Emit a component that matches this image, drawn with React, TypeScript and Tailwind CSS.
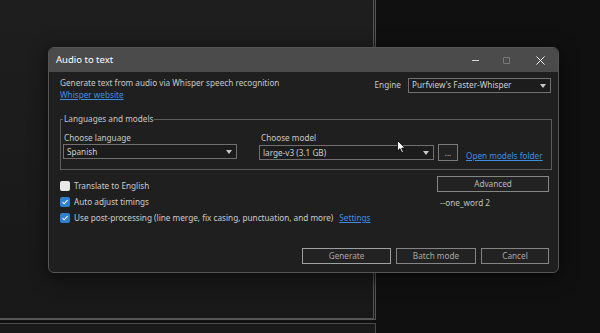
import React from "react";

const font = { fontFamily: '"Segoe UI", "Noto Sans", "Liberation Sans", sans-serif' };

function Select({ text, className }: { text: string; className: string }) {
  return (
    <div className={`flex items-center justify-between h-[15px] border border-[#707070] bg-[#1c1c1c] pl-[3px] pr-[4px] text-[8.2px] text-[#d0d0d0] ${className}`}>
      <span className="leading-none whitespace-nowrap">{text}</span>
      <svg width="6" height="4" viewBox="0 0 6 4"><path d="M0 0 L6 0 L3 4 Z" fill="#c8c8c8" /></svg>
    </div>
  );
}

function Check({ checked, label, children }: { checked: boolean; label: string; children?: React.ReactNode }) {
  return (
    <div className="flex items-center h-[16px]">
      {checked ? (
        <div className="w-[10px] h-[10px] rounded-[2px] bg-[#2f7ed1] flex items-center justify-center">
          <svg width="8" height="8" viewBox="0 0 8 8"><path d="M1.5 4.2 L3.2 5.8 L6.5 2.2" stroke="#fff" strokeWidth="1.1" fill="none" /></svg>
        </div>
      ) : (
        <div className="w-[10px] h-[10px] rounded-[2px] bg-[#e8e8e8]" />
      )}
      <span className="ml-[4px] text-[8.2px] text-[#cccccc] leading-none whitespace-nowrap">{label}</span>
      {children}
    </div>
  );
}

function Btn({ text, className, strong }: { text: string; className: string; strong?: boolean }) {
  return (
    <div className={`flex items-center justify-center h-[16px] bg-[#222222] text-[8.2px] text-[#a8a8a8] ${strong ? "border-[1.5px] border-[#a0a0a0]" : "border border-[#858585]"} ${className}`}>
      {text}
    </div>
  );
}

export default function App() {
  return (
    <div className="relative w-[600px] h-[333px] overflow-hidden bg-[#111111]" style={font}>
      {/* background windows */}
      <div className="flex h-full">
        <div className="flex flex-col w-[376px]">
          <div className="h-[324px] bg-gradient-to-b from-[#1e1e1e] to-[#181818] border-r-[3px] border-b-[2px] border-double border-[#555555]" />
          <div className="mt-[3px] h-[10px] bg-[#1a1a1a] border-t border-r border-[#4a4a4a]" />
        </div>
        <div className="flex-1 bg-[#101010]" />
      </div>

      {/* dialog */}
      <div className="absolute left-[48px] top-[47px] w-[511px] h-[226px] rounded-[6px] overflow-hidden border border-[#555555] bg-[#1f1f1f] shadow-[0_4px_18px_rgba(0,0,0,0.6)] flex flex-col">
        {/* title bar */}
        <div className="h-[24px] bg-[#4b4b4b] flex items-center pl-[7px] shrink-0">
          <span className="text-[9.5px] text-white leading-none">Audio to text</span>
          <div className="ml-auto flex items-center h-full">
            <div className="w-[30px] flex justify-center">
              <div className="w-[7px] h-[1px] bg-[#d8d8d8]" />
            </div>
            <div className="w-[32px] flex justify-center">
              <div className="w-[7px] h-[7px] border border-[#7a7a7a] rounded-[1px]" />
            </div>
            <div className="w-[36px] flex justify-center">
              <svg width="9" height="9" viewBox="0 0 9 9"><path d="M0.5 0.5 L8.5 8.5 M8.5 0.5 L0.5 8.5" stroke="#f0f0f0" strokeWidth="1" /></svg>
            </div>
          </div>
        </div>

        {/* body */}
        <div className="flex-1 flex flex-col pl-[11px] pr-[7px] pt-[5px]">
          <div className="flex">
            <div className="flex flex-col">
              <span className="text-[8.2px] text-[#c8c8c8] leading-[11px] whitespace-nowrap">Generate text from audio via Whisper speech recognition</span>
              <span className="mt-[1px] text-[8.2px] text-[#3d8fe0] underline leading-[11px]">Whisper website</span>
            </div>
            <div className="ml-auto flex items-center h-[15px] mt-[1px]">
              <span className="text-[8.2px] text-[#c8c8c8] mr-[7px]">Engine</span>
              <Select text="Purfview's Faster-Whisper" className="w-[143px]" />
            </div>
          </div>

          <fieldset className="mt-[15px] mr-[2px] border border-[#5c5c5c] pl-[2px] pr-[8px] h-[55px]">
            <legend className="px-[1px] text-[8.2px] text-[#c8c8c8] leading-none">Languages and models</legend>
            <div className="flex mt-[9px]">
              <div className="flex flex-col w-[174px]">
                <span className="text-[8.2px] text-[#c8c8c8] leading-[11px] ml-[1px]">Choose language</span>
                <Select text="Spanish" className="mt-[1px] w-[174px]" />
              </div>
              <div className="flex flex-col ml-[22px]">
                <span className="text-[8.2px] text-[#c8c8c8] leading-[11px] ml-[2px]">Choose model</span>
                <div className="flex items-center mt-[1px]">
                  <Select text="large-v3 (3.1 GB)" className="w-[175px]" />
                  <div className="ml-[4px] w-[20px] h-[17px] border border-[#7a7a7a] bg-[#222] flex items-center justify-center text-[8px] text-[#c8c8c8] leading-none">...</div>
                  <span className="ml-[8px] text-[8.2px] text-[#3d8fe0] underline leading-[11px] mt-[6px] whitespace-nowrap">Open models folder</span>
                </div>
              </div>
            </div>
          </fieldset>

          <div className="flex mt-[4px]">
            <div className="flex flex-col pt-[4px]">
              <Check checked={false} label="Translate to English" />
              <Check checked label="Auto adjust timings" />
              <Check checked label="Use post-processing (line merge, fix casing, punctuation, and more)">
                <span className="ml-[6px] text-[8.2px] text-[#3d8fe0] underline leading-none">Settings</span>
              </Check>
            </div>
            <div className="ml-auto mr-[2px] mt-[2px] flex flex-col w-[112px]">
              <Btn text="Advanced" className="w-[112px] text-[#b8b8b8]" />
              <span className="mt-[7px] ml-[3px] text-[8.2px] text-[#c0c0c0] leading-none">--one_word 2</span>
            </div>
          </div>

          <div className="flex justify-end mt-[22px] mr-[2px] gap-[5px]">
            <Btn text="Generate" className="w-[89px]" strong />
            <Btn text="Batch mode" className="w-[80px]" />
            <Btn text="Cancel" className="w-[68px]" />
          </div>
        </div>
      </div>

      {/* mouse cursor */}
      <svg className="absolute left-[397px] top-[140px]" width="9" height="14" viewBox="0 0 9 14">
        <path d="M0.5 0.5 L0.5 11 L3 8.6 L4.8 12.8 L6.4 12.1 L4.7 8.1 L8 8.1 Z" fill="#ffffff" stroke="#000000" strokeWidth="0.8" />
      </svg>
    </div>
  );
}
